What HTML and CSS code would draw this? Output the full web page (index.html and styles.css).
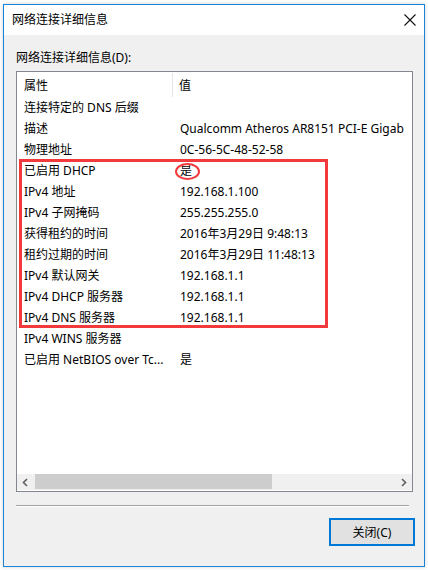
FILE: index.html
```html
<!DOCTYPE html>
<html lang="zh-CN">
<head>
<meta charset="utf-8">
<title>网络连接详细信息</title>
<link rel="stylesheet" href="styles.css">
</head>
<body>
<div class="window">
  <div class="titlebar">
    <span class="title">网络连接详细信息</span>
    <svg class="close" width="12" height="12" viewBox="0 0 12 12"><path d="M0.5 0.5 L11.5 11.5 M11.5 0.5 L0.5 11.5" stroke="#111" stroke-width="1.1" fill="none"/></svg>
  </div>
  <div class="content">
    <div class="label">网络连接详细信息(D):</div>
    <div class="list">
      <div class="header">
        <div class="c1">属性</div>
        <div class="c2">值</div>
      </div>
      <div class="rows">
        <div class="row"><div class="c1">连接特定的 DNS 后缀</div><div class="c2"></div></div>
        <div class="row"><div class="c1">描述</div><div class="c2">Qualcomm Atheros AR8151 PCI-E Gigab</div></div>
        <div class="row"><div class="c1">物理地址</div><div class="c2">0C-56-5C-48-52-58</div></div>
        <div class="row"><div class="c1">已启用 DHCP</div><div class="c2">是</div></div>
        <div class="row"><div class="c1">IPv4 地址</div><div class="c2">192.168.1.100</div></div>
        <div class="row"><div class="c1">IPv4 子网掩码</div><div class="c2">255.255.255.0</div></div>
        <div class="row"><div class="c1">获得租约的时间</div><div class="c2">2016年3月29日 9:48:13</div></div>
        <div class="row"><div class="c1">租约过期的时间</div><div class="c2">2016年3月29日 11:48:13</div></div>
        <div class="row"><div class="c1">IPv4 默认网关</div><div class="c2">192.168.1.1</div></div>
        <div class="row"><div class="c1">IPv4 DHCP 服务器</div><div class="c2">192.168.1.1</div></div>
        <div class="row"><div class="c1">IPv4 DNS 服务器</div><div class="c2">192.168.1.1</div></div>
        <div class="row"><div class="c1">IPv4 WINS 服务器</div><div class="c2"></div></div>
        <div class="row"><div class="c1">已启用 NetBIOS over Tc...</div><div class="c2">是</div></div>
      </div>
      <div class="hscroll">
        <svg class="arrow" width="8" height="9" viewBox="0 0 8 9"><path d="M5.5 1 L2 4.5 L5.5 8" stroke="#606060" stroke-width="1.6" fill="none"/></svg>
        <div class="track"><div class="thumb"></div></div>
        <svg class="arrow" width="8" height="9" viewBox="0 0 8 9"><path d="M2.5 1 L6 4.5 L2.5 8" stroke="#606060" stroke-width="1.6" fill="none"/></svg>
      </div>
      <div class="mark-rect"></div>
      <div class="mark-circle"></div>
    </div>
    <div class="sep"></div>
    <div class="buttons">
      <button class="btn">关闭(C)</button>
    </div>
  </div>
</div>
</body>
</html>
```
FILE: styles.css
```css
html, body {
  margin: 0;
  padding: 0;
  background: #ffffff;
}
body {
  width: 428px;
  height: 570px;
  overflow: hidden;
  font-family: "Noto Sans", "Noto Sans CJK SC", sans-serif;
  font-size: 12px;
  color: #000;
}
.window {
  margin: 4px 0 0 3px;
  width: 422px;
  height: 563px;
  box-sizing: border-box;
  border: 1px solid #1883d7;
  background: #f0f0f0;
  box-shadow: 0 0 4px rgba(0,0,0,0.18);
  display: flex;
  flex-direction: column;
}
.titlebar {
  height: 30px;
  background: #ffffff;
  display: flex;
  align-items: center;
  justify-content: space-between;
  padding: 0 8px 0 8px;
  flex: none;
}
.title {
  font-size: 12px;
  line-height: 16px;
  margin-top: -1px;
}
.close {
  margin-top: -1px;
}
.content {
  flex: 1;
  display: flex;
  flex-direction: column;
  padding: 0 10px 0 12px;
}
.label {
  margin-top: 15px;
  line-height: 16px;
  height: 16px;
}
.list {
  position: relative;
  margin-top: 5px;
  width: 397px;
  height: 421px;
  box-sizing: border-box;
  border: 1px solid #828790;
  background: #ffffff;
  display: flex;
  flex-direction: column;
  overflow: hidden;
}
.header {
  display: flex;
  height: 25px;
  align-items: stretch;
  flex: none;
}
.header .c1 {
  width: 156px;
  box-sizing: border-box;
  padding-left: 7px;
  border-right: 1px solid #e5e5e5;
  margin: 1px 0 0 0;
  display: flex;
  align-items: center;
}
.header .c2 {
  padding-left: 6px;
  display: flex;
  align-items: center;
}
.rows {
  flex: 1;
}
.row {
  display: flex;
  height: 21px;
  line-height: 21px;
  white-space: nowrap;
}
.row .c1 {
  width: 157px;
  box-sizing: border-box;
  padding-left: 7px;
  overflow: hidden;
  flex: none;
}
.row .c2 {
  padding-left: 6px;
  overflow: hidden;
  white-space: nowrap;
  flex: 1;
}
.hscroll {
  flex: none;
  height: 16px;
  margin-bottom: 1px;
  background: #f0f0f0;
  display: flex;
  align-items: center;
}
.arrow {
  flex: none;
  width: 17px;
  display: block;
}
.track {
  flex: 1;
  height: 16px;
}
.thumb {
  width: 237px;
  height: 15px;
  margin-left: 1px;
  background: #cdcdcd;
}
.mark-rect {
  position: absolute;
  left: 2px;
  top: 87px;
  width: 309px;
  height: 169px;
  box-sizing: border-box;
  border: 3px solid #f23a3c;
}
.mark-circle {
  position: absolute;
  left: 158px;
  top: 91px;
  width: 25px;
  height: 17px;
  box-sizing: border-box;
  border: 2px solid #f23a3c;
  border-radius: 50%;
}
.sep {
  margin-top: 13px;
  width: 393px;
  height: 1px;
  background: #a0a0a0;
  border-bottom: 1px solid #ffffff;
}
.buttons {
  display: flex;
  justify-content: flex-end;
  margin-top: 11px;
  padding-right: 0;
}
.btn {
  width: 86px;
  height: 28px;
  box-sizing: border-box;
  border: 2px solid #0078d7;
  background: #e1e1e1;
  font-family: "Noto Sans", "Noto Sans CJK SC", sans-serif;
  font-size: 12px;
  color: #000;
  padding: 0;
  margin-right: -1px;
}
```
